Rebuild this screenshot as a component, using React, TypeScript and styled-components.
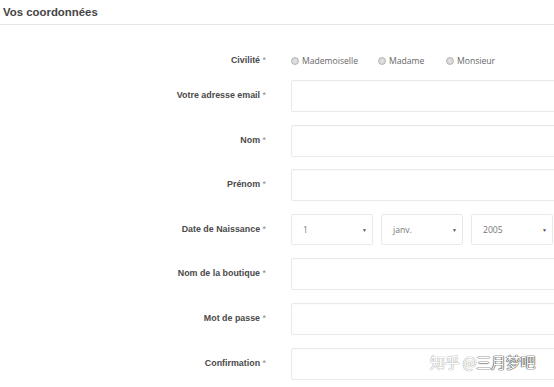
import React from "react";
import styled, { createGlobalStyle } from "styled-components";

const Global = createGlobalStyle`
  html, body { margin: 0; padding: 0; background: #fff; }
  body { width: 554px; height: 387px; overflow: hidden; font-family: "Liberation Sans", Arial, sans-serif; }
`;

const Page = styled.div`
  position: relative;
  width: 554px;
  height: 387px;
  overflow: hidden;
  background: #fff;
`;

const Header = styled.div`
  height: 25px;
  border-bottom: 1px solid #e6e6e6;
  box-sizing: border-box;
  padding: 6px 0 0 3px;
  font-family: "Liberation Sans", Arial, sans-serif;
  font-weight: bold;
  font-size: 11.4px;
  color: #444;
`;

const Form = styled.div`
  display: flex;
  flex-direction: column;
  padding-top: 24px;
`;

const Row = styled.div<{ $h: number; $mb: number }>`
  display: grid;
  grid-template-columns: 266px 320px;
  column-gap: 25px;
  align-items: center;
  height: ${(p) => p.$h}px;
  margin-bottom: ${(p) => p.$mb}px;
`;

const Label = styled.div`
  text-align: right;
  font-family: "Liberation Sans", Arial, sans-serif;
  font-weight: bold;
  font-size: 8.9px;
  color: #4a4a4a;
  white-space: nowrap;
  transform: translateY(-1px);
`;

const Star = styled.span`
  font-weight: normal;
  color: #888;
`;

const Input = styled.div`
  height: 32px;
  box-sizing: border-box;
  border: 1px solid #e9e9e9;
  border-radius: 2px;
  background: #fff;
  box-shadow: inset 0 1px 1px rgba(0, 0, 0, 0.02);
`;

const Radios = styled.div`
  display: flex;
  align-items: center;
  font-family: "Open Sans", sans-serif;
  font-size: 8.6px;
  color: #666;
`;

const RadioItem = styled.label<{ $w: number }>`
  display: flex;
  align-items: center;
  gap: 3px;
  width: ${(p) => p.$w}px;
`;

const Circle = styled.span`
  width: 6px;
  height: 6px;
  border-radius: 50%;
  border: 1px solid #b5b5b5;
  background: radial-gradient(circle, #e4e4e4 0%, #d0d0d0 100%);
`;

const Selects = styled.div`
  display: flex;
  gap: 8px;
`;

const Select = styled.div`
  width: 82px;
  height: 31px;
  box-sizing: border-box;
  border: 1px solid #e9e9e9;
  border-radius: 2px;
  display: flex;
  align-items: center;
  justify-content: space-between;
  padding: 0 5px 0 11px;
  font-family: "Open Sans", sans-serif;
  font-size: 8.6px;
  color: #777;
`;

const Arrow = styled.span`
  font-size: 5px;
  color: #555;
`;

const Watermark = styled.div`
  position: absolute;
  left: 430px;
  top: 351px;
  font-family: "Noto Sans CJK SC", sans-serif;
  font-size: 15px;
  letter-spacing: -0.3px;
  white-space: nowrap;
`;

const WmLight = styled.span`
  color: #fff;
  text-shadow: 0 0 1px #999, 0 0 1px #999;
`;

const WmDark = styled.span`
  color: #fff;
  text-shadow: 0 0 1px #333, 0 0 1px #333, 0 0 1px #333;
`;

const fields: [string, number][] = [
  ["Votre adresse email", 12.6],
  ["Nom", 12.6],
  ["Prénom", 12.6],
];
const fields2: [string, number][] = [
  ["Nom de la boutique", 12.6],
  ["Mot de passe", 12.6],
  ["Confirmation", 0],
];

const Req = ({ children }: { children: React.ReactNode }) => (
  <Label>
    {children} <Star>*</Star>
  </Label>
);

export default function App() {
  return (
    <>
      <Global />
      <Page>
        <Header>Vos coordonnées</Header>
        <Form>
          <Row $h={24} $mb={7}>
            <Req>Civilité</Req>
            <Radios>
              <RadioItem $w={87}>
                <Circle />
                Mademoiselle
              </RadioItem>
              <RadioItem $w={68}>
                <Circle />
                Madame
              </RadioItem>
              <RadioItem $w={60}>
                <Circle />
                Monsieur
              </RadioItem>
            </Radios>
          </Row>
          {fields.map(([l, mb]) => (
            <Row key={l} $h={32} $mb={mb}>
              <Req>{l}</Req>
              <Input />
            </Row>
          ))}
          <Row $h={32} $mb={12.6}>
            <Req>Date de Naissance</Req>
            <Selects>
              <Select>
                1<Arrow>▼</Arrow>
              </Select>
              <Select>
                janv.<Arrow>▼</Arrow>
              </Select>
              <Select>
                2005<Arrow>▼</Arrow>
              </Select>
            </Selects>
          </Row>
          {fields2.map(([l, mb]) => (
            <Row key={l} $h={32} $mb={mb}>
              <Req>{l}</Req>
              <Input />
            </Row>
          ))}
        </Form>
        <Watermark>
          <WmLight>知乎 @</WmLight>
          <WmDark>三月梦吧</WmDark>
        </Watermark>
      </Page>
    </>
  );
}
